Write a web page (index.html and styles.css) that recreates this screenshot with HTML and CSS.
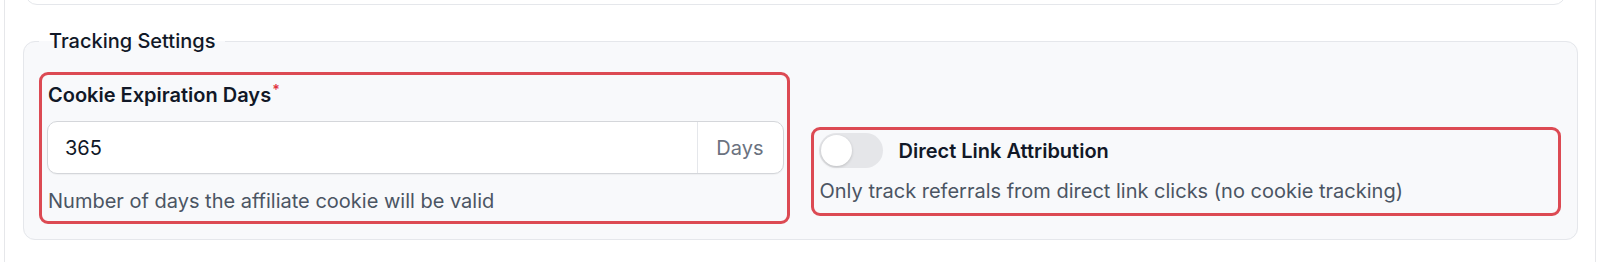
FILE: index.html
```html
<!DOCTYPE html>
<html lang="en">
<head>
<meta charset="utf-8">
<title>Tracking Settings</title>
<link rel="stylesheet" href="styles.css">
</head>
<body>
<div class="page">
  <div class="prev-card"></div>
  <fieldset class="group">
    <legend class="group-title">Tracking Settings</legend>
    <div class="grid">
      <div class="field hl">
        <label class="label" for="days">Cookie Expiration Days<span class="req">*</span></label>
        <div class="input-group">
          <input id="days" class="input" type="text" value="365">
          <span class="addon">Days</span>
        </div>
        <p class="help">Number of days the affiliate cookie will be valid</p>
      </div>
      <div class="toggle-field hl">
        <div class="toggle-row">
          <span class="switch"><span class="knob"></span></span>
          <span class="toggle-title">Direct Link Attribution</span>
        </div>
        <p class="help">Only track referrals from direct link clicks (no cookie tracking)</p>
      </div>
    </div>
  </fieldset>
</div>
</body>
</html>
```
FILE: styles.css
```css
* { box-sizing: border-box; }
html, body {
  margin: 0;
  padding: 0;
  background: #ffffff;
  font-family: Inter, "Noto Sans", "Liberation Sans", sans-serif;
  color: #111827;
}
.page {
  margin: 0 4px;
  height: 262px;
  border-left: 1px solid #e6e7ea;
  border-right: 1px solid #e6e7ea;
  padding: 0 17px 0 18px;
  overflow: hidden;
}
.prev-card {
  height: 30px;
  margin: -25px 12px 0 2px;
  border: 1px solid #e5e7eb;
  border-radius: 12px;
  background: #ffffff;
}
.group {
  margin: 22px 0 0 0;
  padding: 0 16px 15px 15px;
  border: 1px solid #e5e7eb;
  border-radius: 12px;
  background: #f8f9fb;
  min-width: 0;
}
.group-title {
  padding: 0 10px;
  font-size: 20px;
  font-weight: 500;
  line-height: 28px;
  color: #111827;
}
.grid {
  display: grid;
  grid-template-columns: 1fr 1fr;
  column-gap: 21px;
  padding-top: 17px;
  align-items: start;
}
.hl {
  border: 3px solid #dc4a53;
  border-radius: 9px;
}
.field {
  padding: 6px 3px 6px 5px;
}
.label {
  display: block;
  font-size: 20px;
  font-weight: 600;
  line-height: 28px;
  padding-left: 1px;
  color: #111827;
}
.req {
  color: #e0343f;
  font-size: 14px;
  vertical-align: top;
  position: relative;
  top: -5px;
  margin-left: 1px;
}
.input-group {
  display: flex;
  margin-top: 12px;
  height: 53px;
  border: 1px solid #d4d6da;
  border-radius: 10px;
  background: #ffffff;
  box-shadow: 0 1px 1px rgba(0,0,0,0.04);
  overflow: hidden;
}
.input {
  flex: 1;
  min-width: 0;
  border: 0;
  outline: none;
  background: transparent;
  padding: 0 17px;
  font-family: inherit;
  font-size: 20px;
  color: #111827;
}
.addon {
  display: flex;
  align-items: center;
  padding: 0 19px 0 18px;
  border-left: 1px solid #e5e7eb;
  font-size: 20px;
  color: #6b7280;
}
.help {
  margin: 13px 0 0 0;
  font-size: 20px;
  line-height: 28px;
  color: #4b5563;
  padding-left: 1px;
}
.toggle-field {
  margin-top: 55px;
  padding: 3px 5px 8px 5px;
}
.toggle-field .help {
  margin-top: 9px;
}
.toggle-row {
  display: flex;
  align-items: center;
  gap: 16px;
}
.switch {
  display: flex;
  align-items: center;
  width: 64px;
  height: 35px;
  border-radius: 18px;
  background: #e5e6e9;
  padding: 2px;
}
.knob {
  width: 31px;
  height: 31px;
  border-radius: 50%;
  background: #ffffff;
  box-shadow: 0 1px 3px rgba(0,0,0,0.18);
}
.toggle-title {
  font-size: 20px;
  font-weight: 600;
  line-height: 28px;
  color: #111827;
}
```
